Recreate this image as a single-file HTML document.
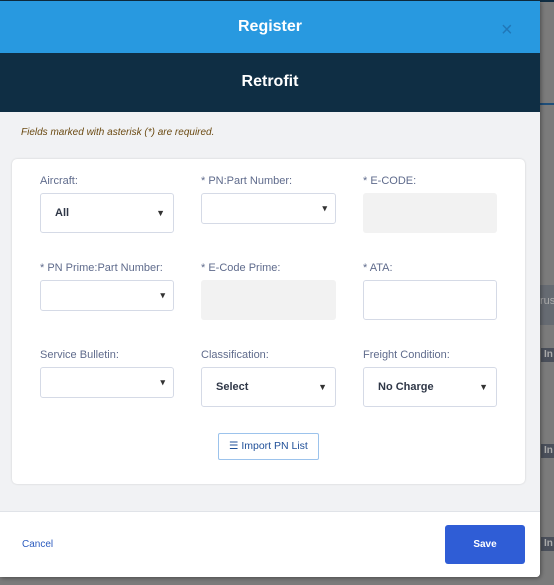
<!DOCTYPE html>
<html><head><style>
*{box-sizing:border-box;margin:0;padding:0}
body{width:554px;height:585px;overflow:hidden;background:#7b7b7b;font-family:"Liberation Sans",sans-serif;position:relative}
.abs{position:absolute}
.lbl{position:absolute;font-size:11px;color:#5f6b8c}
.sel{position:absolute;background:#fff;border:1px solid #d5dae6;border-radius:3px;font-size:11px;color:#2f3747;font-weight:bold;padding-left:14px;display:flex;align-items:center}
.sel .ar{position:absolute;right:8px;font-size:9px;color:#333}
.dis{position:absolute;background:#f2f2f2;border-radius:3px}
.badge{position:absolute;left:541px;width:13px;height:14px;background:#4a4f5a;color:#aaa;font-size:10px;font-weight:bold;padding-left:3px;line-height:14px}
</style></head><body>
<div class="abs" style="left:0;top:0;width:554px;height:2px;background:#0f2e44"></div>
<div class="abs" style="left:540px;top:103px;width:14px;height:2px;background:#1e4e7a"></div>
<div class="abs" style="left:540px;top:285px;width:14px;height:40px;background:#666b72;color:#aaa;font-size:11px;padding:10px 0 0 0;overflow:hidden">rus</div>
<div class="badge" style="top:348px">In</div>
<div class="badge" style="top:444px">In</div>
<div class="badge" style="top:537px">In</div>
<div class="abs" style="left:0;top:1px;width:540px;height:576px;background:#f1f2f4;border-radius:0 0 4px 0;box-shadow:1px 1px 4px rgba(0,0,0,.4);overflow:hidden">
 <div class="abs" style="left:0;top:0;width:540px;height:52px;background:#2899e0;color:#fff;font-weight:bold;font-size:16px;text-align:center;line-height:52px">Register</div>
 <div class="abs" style="left:501px;top:19px;color:#2077b8;font-size:20px;line-height:20px">×</div>
 <div class="abs" style="left:0;top:52px;width:540px;height:59px;background:#0f2e44;color:#fff;font-weight:bold;font-size:16px;text-align:center;line-height:58px">Retrofit</div>
 <div class="abs" style="left:21px;top:126px;font-size:10px;font-style:italic;color:#6b4a12">Fields marked with asterisk (*) are required.</div>
 <div class="abs" style="left:12px;top:158px;width:513px;height:325px;background:#fff;border-radius:5px;box-shadow:0 0 2px rgba(0,0,0,.15)"></div>
 <div class="abs" style="left:0;top:510px;width:540px;height:66px;background:#fff;border-top:1px solid #e0e3e8"></div>
</div>
<div class="lbl" style="left:40px;top:175px">Aircraft:</div>
<div class="lbl" style="left:201px;top:175px">* PN:Part Number:</div>
<div class="lbl" style="left:363px;top:175px">* E-CODE:</div>
<div class="sel" style="left:40px;top:193px;width:134px;height:40px">All<span class="ar">▼</span></div>
<div class="sel" style="left:201px;top:193px;width:135px;height:31px"><span class="ar">▾</span></div>
<div class="dis" style="left:363px;top:193px;width:134px;height:40px"></div>
<div class="lbl" style="left:40px;top:262px">* PN Prime:Part Number:</div>
<div class="lbl" style="left:201px;top:262px">* E-Code Prime:</div>
<div class="lbl" style="left:363px;top:262px">* ATA:</div>
<div class="sel" style="left:40px;top:280px;width:134px;height:31px"><span class="ar">▾</span></div>
<div class="dis" style="left:201px;top:280px;width:135px;height:40px"></div>
<div class="sel" style="left:363px;top:280px;width:134px;height:40px"></div>
<div class="lbl" style="left:40px;top:349px">Service Bulletin:</div>
<div class="lbl" style="left:201px;top:349px">Classification:</div>
<div class="lbl" style="left:363px;top:349px">Freight Condition:</div>
<div class="sel" style="left:40px;top:367px;width:134px;height:31px"><span class="ar">▾</span></div>
<div class="sel" style="left:201px;top:367px;width:135px;height:40px">Select<span class="ar">▼</span></div>
<div class="sel" style="left:363px;top:367px;width:134px;height:40px">No Charge<span class="ar">▼</span></div>
<div class="abs" style="left:218px;top:433px;width:101px;height:27px;border:1px solid #9cc3ec;border-radius:2px;background:#fff;color:#1f4f98;font-size:10.5px;line-height:25px;padding-left:10px">☰ Import PN List</div>
<div class="abs" style="left:22px;top:539px;font-size:10px;color:#2c5cbf">Cancel</div>
<div class="abs" style="left:445px;top:525px;width:80px;height:39px;background:#2f5dd6;border-radius:3px;color:#fff;font-size:10px;font-weight:bold;text-align:center;line-height:39px">Save</div>
</body></html>
